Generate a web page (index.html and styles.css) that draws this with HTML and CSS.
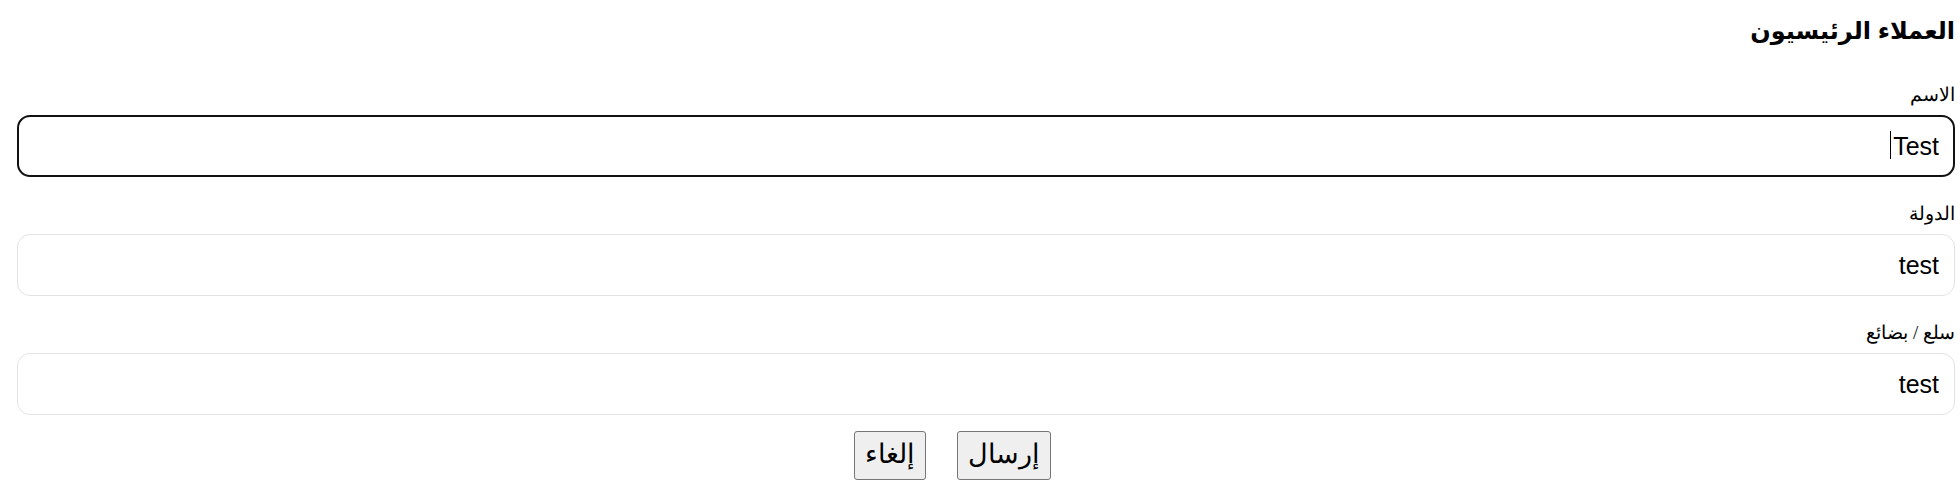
FILE: index.html
```html
<!DOCTYPE html>
<html lang="ar" dir="rtl">
<head>
<meta charset="utf-8">
<title>العملاء الرئيسيون</title>
<link rel="stylesheet" href="styles.css">
</head>
<body>
<form class="form">
  <h2 class="title">العملاء الرئيسيون</h2>
  <div class="field">
    <label class="label" for="name">الاسم</label>
    <div class="input-wrap">
      <input class="input input-focused" id="name" type="text" value="Test">
      <span class="caret"></span>
    </div>
  </div>
  <div class="field">
    <label class="label" for="country">الدولة</label>
    <input class="input" id="country" type="text" value="test">
  </div>
  <div class="field">
    <label class="label" for="goods">سلع / بضائع</label>
    <input class="input" id="goods" type="text" value="test">
  </div>
  <div class="actions">
    <button class="btn" type="submit">إرسال</button>
    <button class="btn" type="button">إلغاء</button>
  </div>
</form>
</body>
</html>
```

FILE: styles.css
```css
html, body {
  margin: 0;
  padding: 0;
  background: #ffffff;
}

body {
  font-family: "Liberation Serif", "DejaVu Serif", serif;
  color: #000;
}

.form {
  display: flex;
  flex-direction: column;
  padding: 14px 5px 0 17px;
}

.title {
  margin: 0;
  height: 69px;
  font-family: "Liberation Sans", Arial, "DejaVu Sans", sans-serif;
  font-size: 24px;
  font-weight: bold;
  line-height: 34px;
}

.field {
  display: flex;
  flex-direction: column;
  padding-top: 25px;
  height: 94px;
}

.field:first-of-type {
  padding-top: 0;
}

.label {
  font-size: 19px;
  line-height: 24px;
  height: 32px;
}

.input-wrap {
  position: relative;
  display: flex;
}

.input {
  box-sizing: border-box;
  width: 100%;
  height: 62px;
  padding: 0 15px;
  border: 1px solid #e3e3e3;
  border-radius: 13px;
  font-family: "Liberation Sans", Arial, sans-serif;
  font-size: 25px;
  color: #000;
  background: #fff;
  outline: none;
}

.input-focused {
  border: 2px solid #111;
  padding: 0 14px;
}

.caret {
  position: absolute;
  top: 16px;
  right: 64px;
  width: 1px;
  height: 28px;
  background: #000;
}

.actions {
  display: flex;
  justify-content: center;
  gap: 31px;
  padding: 16px 68px 0 0;
}

.btn {
  font-family: "Liberation Serif", "DejaVu Serif", serif;
  font-size: 27px;
  line-height: 35px;
  padding: 5px 10px 7px;
  background: #efefef;
  color: #000;
  border: 1px solid #767676;
  border-radius: 3px;
}
```
